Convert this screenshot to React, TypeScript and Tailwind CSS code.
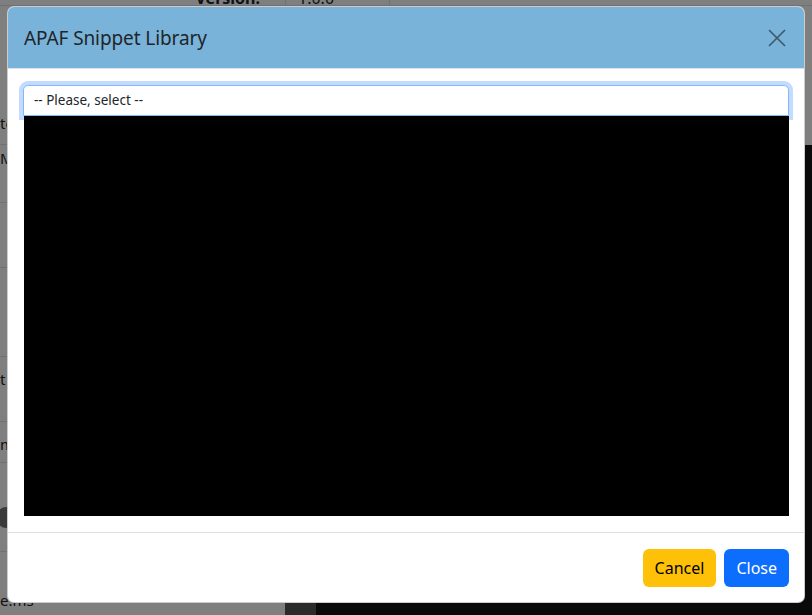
import { X } from "lucide-react";

const font = { fontFamily: '"Noto Sans", "Open Sans", Arial, sans-serif' };

function BackgroundPage() {
  return (
    <div className="flex h-[615px] w-[812px] flex-col overflow-hidden bg-white text-[#212529]">
      {/* properties table */}
      <div className="flex h-[145px] flex-col">
        <div className="-mt-[10px] flex h-[16px] border-b border-[#dee2e6] text-[16px] leading-[16px]">
          <div className="w-[285px] pr-[25px] text-right font-bold">Version:</div>
          <div className="w-[105px] border-x border-[#dee2e6] pl-[12px]">1.0.0</div>
          <div className="flex-1" />
        </div>
        <div className="flex w-[285px] flex-1 flex-col">
          <div className="flex-1" />
          <div className="h-[32px] border-b border-[#dee2e6] text-[15px] leading-[20px]">text</div>
        </div>
      </div>
      <div className="flex flex-1">
        <div className="flex w-[285px] flex-col text-[15px] leading-[20px]">
          <div className="-mt-[7px] h-[65px] border-b border-[#dee2e6] pt-[10px]">Mode</div>
          <div className="h-[65px] border-b border-[#dee2e6]" />
          <div className="h-[89px] border-b border-[#dee2e6]" />
          <div className="h-[65px] border-b border-[#dee2e6] pt-[12px]">t</div>
          <div className="h-[41px] border-b border-[#dee2e6] pt-[12px]">max</div>
          <div className="flex h-[89px] items-center border-b border-[#dee2e6] pt-[20px]">
            <div className="-ml-[4px] h-[21px] w-[21px] rounded-full bg-[#747474]" />
          </div>
          <div className="pt-[38px]">e.ms</div>
        </div>
        <div className="w-[31px] bg-[#565656]" />
        <div className="flex-1 bg-[#141414]" />
      </div>
    </div>
  );
}

export default function App() {
  return (
    <div className="relative h-[615px] w-[812px] overflow-hidden" style={font}>
      <BackgroundPage />
      <div className="absolute inset-0 bg-black/50 pl-[7px] pt-[6px]">
        <div className="flex h-[597px] w-[798px] flex-col overflow-hidden rounded-[7px] border border-black/20 bg-white">
          <div className="flex h-[62px] shrink-0 items-center justify-between border-b border-[#dee2e6] bg-[#7ab3d9] pl-[16px] pr-[12px]">
            <h1 className="text-[19px] leading-[24px] tracking-[-0.1px] text-[#212529]">APAF Snippet Library</h1>
            <X className="h-[30px] w-[30px] text-[#3f5b70]" strokeWidth={1.4} />
          </div>
          <div className="flex flex-col px-[15px] pt-[16px] pb-[16px]">
            <div className="flex h-[31px] items-center rounded-t-[5px] border border-[#86b7fe] bg-white px-[10px] text-[13.5px] text-[#212529] shadow-[0_0_0_4px_rgba(13,110,253,0.25)]">
              -- Please, select --
            </div>
            <div className="ml-[1px] h-[400px] bg-black" />
          </div>
          <div className="flex flex-1 items-center justify-end gap-[8px] border-t border-[#dee2e6] px-[15px]">
            <button className="h-[38px] rounded-[6px] bg-[#ffc107] px-[12px] text-[16px] text-black">
              Cancel
            </button>
            <button className="h-[38px] rounded-[6px] bg-[#0d6efd] px-[12px] text-[16px] text-white">
              Close
            </button>
          </div>
        </div>
      </div>
    </div>
  );
}
